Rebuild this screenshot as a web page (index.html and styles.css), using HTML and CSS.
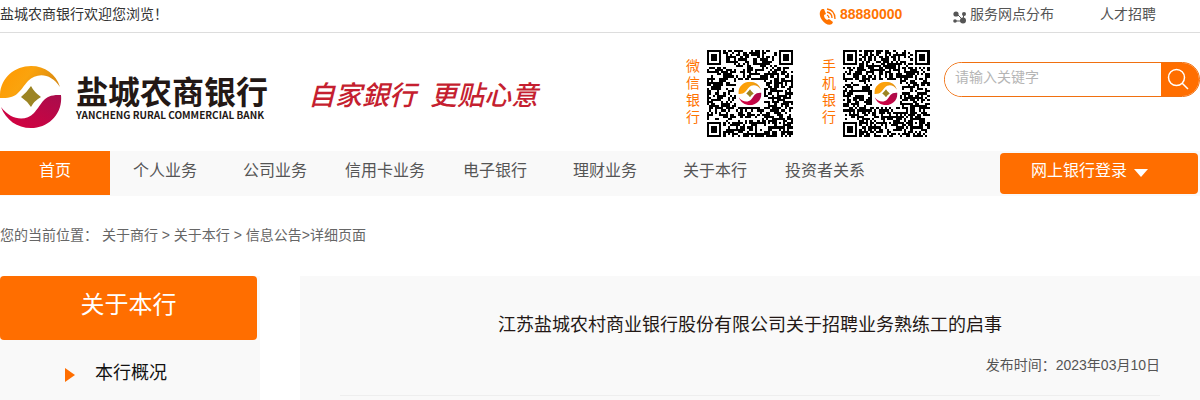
FILE: index.html
```
<!DOCTYPE html>
<html lang="zh-CN">
<head>
  <meta charset="UTF-8" />
  <title>盐城农商银行</title>
  <link rel="stylesheet" href="styles.css">
</head>
<body>
  <svg width="0" height="0" class="defs">
    <defs>
      <linearGradient id="gold" x1="0" y1="0" x2="1" y2="0.4">
        <stop offset="0" stop-color="#ff9800" />
        <stop offset="0.5" stop-color="#fba30d" />
        <stop offset="1" stop-color="#d98a12" />
      </linearGradient>
      <linearGradient id="wine" x1="0" y1="1" x2="1" y2="0">
        <stop offset="0" stop-color="#d8003f" />
        <stop offset="1" stop-color="#a80d4c" />
      </linearGradient>
      <symbol id="mark" viewBox="0 0 62 62">
        <path d="M0 32 C-1 13 14 0 31 0 C45 0 56 8 60 21 C51 7 37 6 28 15 C19 25 18 33 0 32Z" fill="url(#gold)" />
        <path d="M61 29 C63 48 48 62 31 62 C17 62 6 54 1 41 C11 54 25 56 34 47 C43 37 43 28 61 29Z" fill="url(#wine)" />
        <path d="M31 20 Q34 26 41 31 Q34 35 31 41 Q27 35 21 31 Q27 26 31 20Z" fill="#9c8424" />
      </symbol>
    </defs>
  </svg>

  <div class="topbar">
    <span class="welcome">盐城农商银行欢迎您浏览！</span>
    <span class="phone">
      <svg width="17" height="18" viewBox="0 0 17 18">
        <path d="M3 1 C0 3 0 8 3 12 C6 16 10 18 13 16 L14 14 L10 11 L8 12 C6 11 5 9 5 7 L7 6 L5 1Z" fill="#ff7300" />
        <path d="M8 7 Q10 8 10 10 M8 4 Q13 5 13 10 M8 1 Q16 2 16 11" fill="none" stroke="#ff7300" stroke-width="1.3" />
      </svg>
      88880000
    </span>
    <a class="branch" href="#">
      <svg width="14" height="13" viewBox="0 0 14 13">
        <path d="M3 2 L10 9 L11 2 M2 10 H10" fill="none" stroke="#555" />
        <circle cx="3" cy="3" r="2.6" fill="#555" />
        <circle cx="11" cy="3" r="2" fill="#555" />
        <circle cx="2" cy="10" r="1.8" fill="#555" />
        <circle cx="10" cy="9.500" r="3" fill="#555" />
      </svg>
      服务网点分布
    </a>
    <a class="jobs" href="#">人才招聘</a>
  </div>

  <div class="header">
    <a class="logo" href="#">
      <svg class="logo-mark" width="62" height="62"><use href="#mark" /></svg>
      <span class="logo-text">
        <span class="logo-cn">盐城农商银行</span>
        <span class="logo-en">YANCHENG RURAL COMMERCIAL BANK</span>
      </span>
    </a>
    <div class="slogan"><span>自家銀行</span><span>更贴心意</span></div>
    <div class="qr">
      <span class="qr-label">微信银行</span>
      <svg class="qr-code" data-seed="7" viewBox="0 0 41 41"></svg>
    </div>
    <div class="qr">
      <span class="qr-label">手机银行</span>
      <svg class="qr-code" data-seed="23" viewBox="0 0 41 41"></svg>
    </div>
    <form class="search">
      <input type="text" placeholder="请输入关键字" aria-label="请输入关键字" />
      <button type="button" aria-label="搜索">
        <svg width="22" height="22" viewBox="0 0 22 22" fill="none" stroke="#fff" stroke-width="1.5">
          <circle cx="9.500" cy="9.500" r="8" />
          <path d="M15 15 L21 21" />
        </svg>
      </button>
    </form>
  </div>

  <div class="nav">
    <a class="active" href="#">首页</a>
    <a href="#">个人业务</a>
    <a href="#">公司业务</a>
    <a href="#">信用卡业务</a>
    <a href="#">电子银行</a>
    <a href="#">理财业务</a>
    <a href="#">关于本行</a>
    <a href="#">投资者关系</a>
    <button class="login" type="button">网上银行登录<i class="arrow-down"></i></button>
  </div>

  <div class="crumbs">
    您的当前位置：&nbsp;<a href="#">关于商行</a> &gt; <a href="#">关于本行</a> &gt; <a href="#">信息公告</a>&gt;详细页面
  </div>

  <div class="main">
    <div class="side">
      <h2>关于本行</h2>
      <a href="#"><i class="arrow-right"></i>本行概况</a>
    </div>
    <div class="article">
      <h1>江苏盐城农村商业银行股份有限公司关于招聘业务熟练工的启事</h1>
      <p class="date">发布时间：2023年03月10日</p>
    </div>
  </div>

  <script src="qr.js"></script>
</body>
</html>
```
FILE: styles.css
```
body {
  margin: 0;
  font-family: "Liberation Sans", "Noto Sans CJK SC", sans-serif;
  font-size: 14px;
  color: #333;
  background: #fff;
}
a {
  color: inherit;
  text-decoration: none;
}
h1, h2, p {
  margin: 0;
  font-weight: normal;
}
.defs {
  position: absolute;
}
.topbar {
  display: flex;
  height: 32px;
  line-height: 28px;
  border-bottom: 1px solid #ddd;
}
.welcome {
  flex: 1;
}
.phone, .branch {
  display: flex;
  gap: 4px;
}
.phone {
  width: 134px;
  color: #ff7300;
  font-weight: bold;
}
.phone svg {
  margin-top: 8px;
}
.branch {
  gap: 3px;
  width: 147px;
  color: #555;
}
.branch svg {
  margin-top: 11px;
}
.jobs {
  width: 100px;
  color: #555;
}
.header {
  display: flex;
  height: 118px;
}
.logo {
  display: flex;
  gap: 14px;
  width: 270px;
  margin-top: 33px;
  color: #231815;
}
.logo-mark {
  flex: none;
}
.logo-text {
  display: flex;
  flex-direction: column;
  margin-top: 7px;
}
.logo-cn {
  font-family: "Noto Sans CJK SC", sans-serif;
  font-size: 32px;
  line-height: 34px;
  font-weight: bold;
}
.logo-en {
  font-family: "Noto Sans CJK SC", sans-serif;
  font-size: 10px;
  line-height: 16px;
  font-weight: bold;
  white-space: nowrap;
}
.slogan {
  flex: 1;
  display: flex;
  gap: 14px;
  margin: 45px 0 0 38px;
  font-size: 27px;
  line-height: 36px;
  font-style: italic;
  font-weight: 500;
  color: #c51f30;
  white-space: nowrap;
}
.qr {
  display: flex;
  gap: 6px;
  margin: 17px 28px 0 0;
}
.qr-label {
  width: 14px;
  margin-top: 8px;
  line-height: 17px;
  color: #ff7300;
}
.qr-code {
  width: 88px;
  height: 87px;
}
.search {
  display: flex;
  box-sizing: border-box;
  width: 256px;
  height: 35px;
  margin-top: 29px;
  margin-left: -14px;
  border: 1px solid #f07010;
  border-radius: 18px;
  overflow: hidden;
}
.search input {
  flex: 1;
  min-width: 0;
  padding: 0 10px 6px;
  border: 0;
  outline: 0;
  font: inherit;
}
.search input::placeholder {
  color: #b5b5b5;
}
.search button {
  width: 38px;
  padding: 2px 4px 0 0;
  border: 0;
  background: #ff6e00;
}
.nav {
  display: flex;
  height: 45px;
  background: #f9f9f9;
  font-size: 16px;
  line-height: 40px;
  color: #555;
}
.nav a {
  width: 110px;
  height: 44px;
  text-align: center;
}
.nav .active {
  background: #ff6e00;
  color: #fff;
}
.login {
  display: flex;
  width: 198px;
  height: 41px;
  margin: 2px 2px 0 auto;
  padding: 0 0 0 31px;
  border: 0;
  border-radius: 4px;
  background: #ff6e00;
  color: #fff;
  font: inherit;
  line-height: 36px;
}
.arrow-down {
  margin: 16px 0 0 7px;
  border: 7px solid transparent;
  border-top: 8px solid #fff;
  border-bottom: 0;
}
.crumbs {
  padding: 29px 0 30px;
  line-height: 21px;
  color: #666;
}
.main {
  display: flex;
  gap: 40px;
}
.side {
  width: 260px;
  background: #f9f9f9;
}
.side h2 {
  margin-right: 3px;
  height: 64px;
  border-radius: 4px;
  background: #ff6e00;
  color: #fff;
  font-size: 24px;
  line-height: 58px;
  text-align: center;
}
.side a {
  display: flex;
  gap: 20px;
  padding: 6px 0 0 65px;
  font-size: 18px;
  line-height: 54px;
  color: #111;
}
.arrow-right {
  align-self: flex-start;
  margin-top: 22px;
  border: 7px solid transparent;
  border-left: 10px solid #ff6e00;
  border-right: 0;
}
.article {
  flex: 1;
  padding: 28px 40px 4px;
  background: #f9f9f9;
}
.article h1 {
  font-size: 18px;
  line-height: 42px;
  text-align: center;
  color: #231815;
}
.date {
  padding-bottom: 10px;
  border-bottom: 1px solid #eee;
  line-height: 39px;
  text-align: right;
  color: #555;
}
```
FILE: qr.js
```
const SIZE = 41;

// ring pattern used by the corner and alignment squares
function ring(x, y, cx, cy, r) {
  const d = Math.max(Math.abs(x - cx), Math.abs(y - cy));
  if (d > r + 1) return null;
  if (r === 3) return d === 3 || d < 2;
  return d > r ? null : d !== 1;
}

function drawCode(svg) {
  let seed = Number(svg.dataset.seed);
  let path = "";
  for (let y = 0; y < SIZE; y++) {
    for (let x = 0; x < SIZE; x++) {
      seed = (seed * 1103515245 + 12345) % 2147483648;
      let on = seed / 2147483648 < 0.54;
      const marks = [
        ring(x, y, 3, 3, 3),
        ring(x, y, 37, 3, 3),
        ring(x, y, 3, 37, 3),
        ring(x, y, 34, 34, 2)
      ];
      for (const m of marks) {
        if (m !== null) on = m;
      }
      if (Math.abs(x - 20) < 7 && Math.abs(y - 20) < 7) on = false;
      if (on) path += `M${x} ${y}h1v1h-1z`;
    }
  }
  svg.innerHTML = `<path d="${path}" fill="#000" shape-rendering="crispEdges"/>
    <use href="#mark" x="15" y="15" width="11" height="11"/>`;
}

document.querySelectorAll(".qr-code").forEach(drawCode);
```
